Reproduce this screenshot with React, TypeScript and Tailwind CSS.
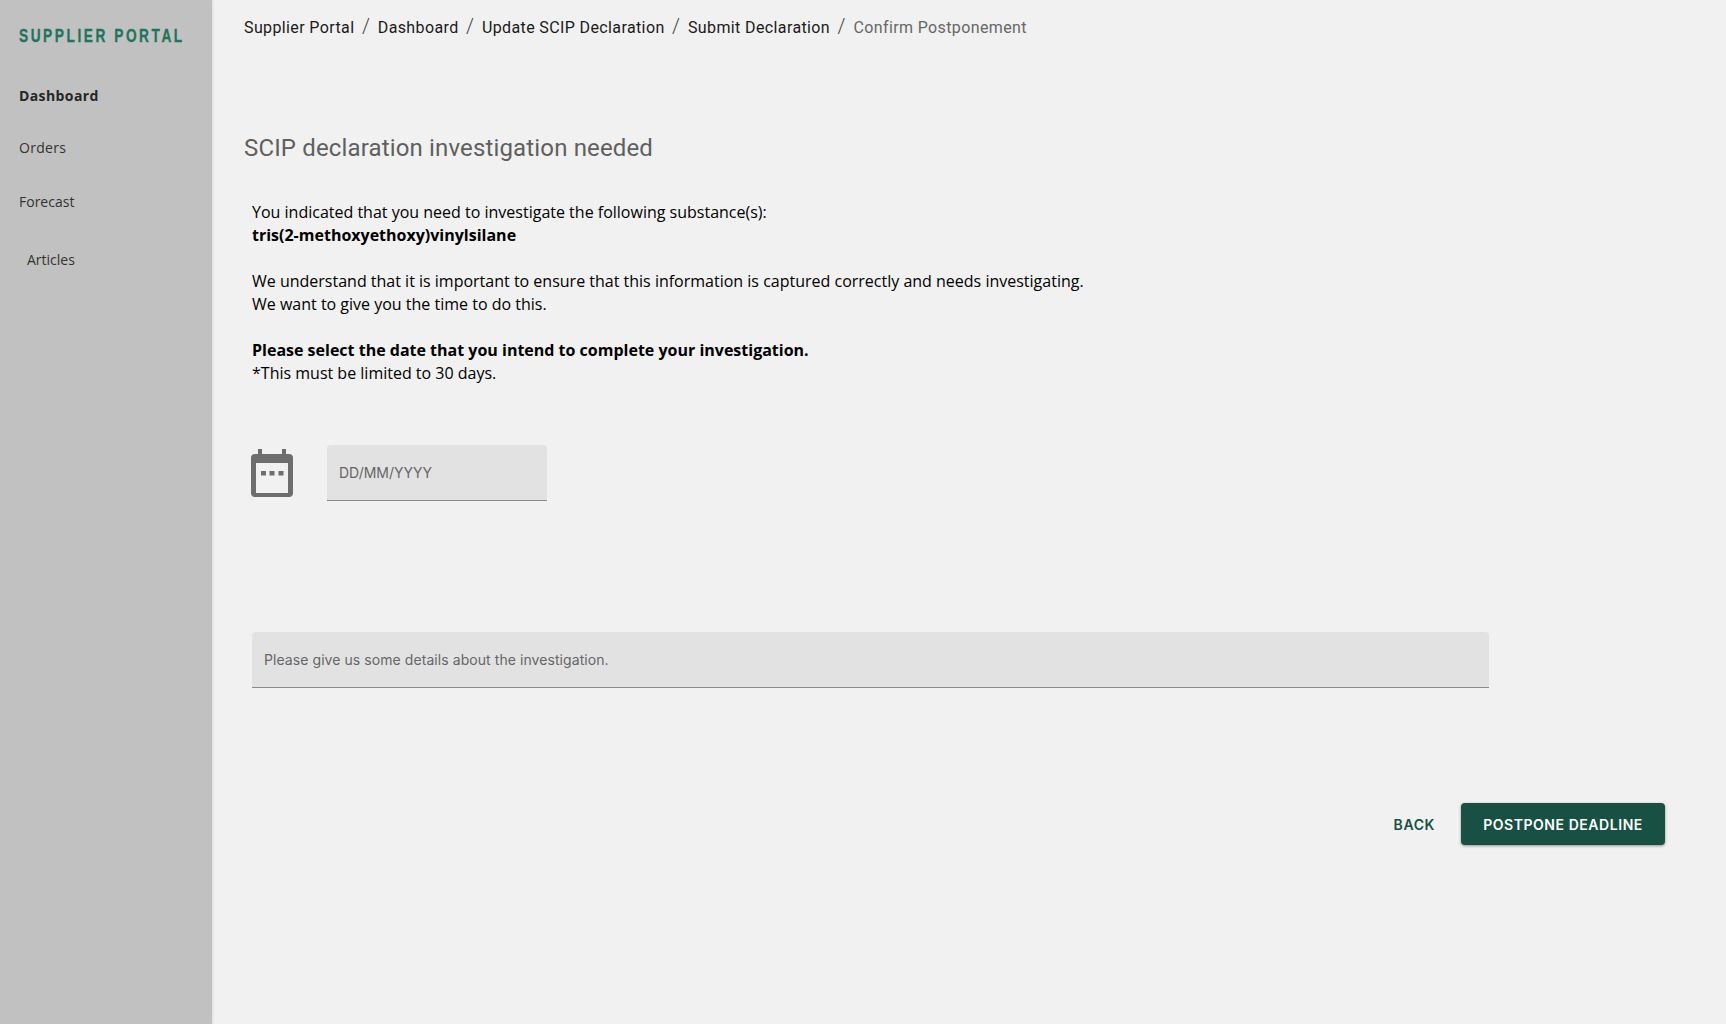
import React from 'react';

const CRUMBS = ['Supplier Portal', 'Dashboard', 'Update SCIP Declaration', 'Submit Declaration'];

const CalendarIcon = () => (
  <svg width="42" height="48" viewBox="0 0 42 48" className="-ml-[1px] shrink-0">
    <path
      fill="#6e6e6e"
      fillRule="evenodd"
      d="M7 0h4v5h20V0h4v5h3a4 4 0 0 1 4 4v35a4 4 0 0 1-4 4H4a4 4 0 0 1-4-4V9a4 4 0 0 1 4-4h3zM5 14v30h32V14z"
    />
    <rect x="10" y="22" width="5" height="4.5" fill="#6e6e6e" />
    <rect x="18.5" y="22" width="5" height="4.5" fill="#6e6e6e" />
    <rect x="27.5" y="22" width="5" height="4.5" fill="#6e6e6e" />
  </svg>
);

export default function App() {
  return (
    <div className="flex h-[1024px] overflow-hidden bg-[#f1f1f1] font-['Open_Sans',sans-serif]">
      {/* Sidebar */}
      <aside className="w-[212px] shrink-0 bg-[#c1c1c1] pl-[19px] shadow-[1px_0_2px_rgba(0,0,0,0.08)]">
        <div className="origin-left scale-x-[0.72] pt-[25px] font-['Liberation_Sans',sans-serif] text-[19px] leading-[22px] font-bold tracking-[3.55px] whitespace-nowrap text-[#22735c] [-webkit-text-stroke:0.3px_#22735c]">
          SUPPLIER PORTAL
        </div>
        <nav className="mt-[39px] text-[14px] leading-[20px] text-[#333]">
          <div className="font-bold tracking-[0.4px] text-[#262626]">Dashboard</div>
          <div className="mt-[32px] tracking-[0.3px]">Orders</div>
          <div className="mt-[34px]">Forecast</div>
          <div className="mt-[38px] pl-[8px]">Articles</div>
        </nav>
      </aside>

      {/* Main */}
      <main className="min-w-0 flex-1 pl-[32px]">
        <div className="flex items-center pt-[17px] font-['Roboto',sans-serif] text-[16px] leading-[22px] tracking-[0.38px] whitespace-nowrap">
          {CRUMBS.map((c) => (
            <React.Fragment key={c}>
              <span className="text-[#1a1a1a]">{c}</span>
              <span className="mx-[7.5px] -translate-y-[2px] text-[20px] font-light text-[#444]">/</span>
            </React.Fragment>
          ))}
          <span className="text-[#666]">Confirm Postponement</span>
        </div>

        <h1 className="mt-[93px] font-['Roboto',sans-serif] text-[24px] leading-[32px] font-normal tracking-[0.15px] text-[#5f5f5f]">
          SCIP declaration investigation needed
        </h1>

        <div className="ml-[8px] mt-[37px] text-[16px] leading-[23px] text-black">
          <p>You indicated that you need to investigate the following substance(s):</p>
          <p className="font-bold">tris(2-methoxyethoxy)vinylsilane</p>
          <p className="mt-[23px]">We understand that it is important to ensure that this information is captured correctly and needs investigating.</p>
          <p>We want to give you the time to do this.</p>
          <p className="mt-[23px] font-bold">Please select the date that you intend to complete your investigation.</p>
          <p>*This must be limited to 30 days.</p>
        </div>

        <div className="ml-[8px] mt-[60px] flex items-center gap-[34px]">
          <CalendarIcon />
          <div className="flex h-[56px] w-[220px] items-center rounded-t-[4px] border-b border-[#8a8a8a] bg-[#e2e2e2] pl-[12px] font-['Inter',sans-serif] text-[14px] text-[#666]">
            DD/MM/YYYY
          </div>
        </div>

        <div className="ml-[8px] mt-[131px] flex h-[56px] w-[1237px] items-center rounded-t-[4px] border-b border-[#8a8a8a] bg-[#e2e2e2] pl-[12px] font-['Inter',sans-serif] text-[14px] tracking-[0.07px] text-[#666]">
          Please give us some details about the investigation.
        </div>

        <div className="mt-[115px] flex items-center justify-end pr-[61px]">
          <button className="mr-[26px] font-['Inter',sans-serif] text-[14px] font-semibold tracking-[0.6px] text-[#185044]">
            BACK
          </button>
          <button className="flex h-[42px] w-[204px] items-center justify-center rounded-[4px] bg-[#185044] font-['Inter',sans-serif] text-[14px] font-semibold tracking-[0.55px] text-white shadow-[0_1px_3px_rgba(0,0,0,0.4)]">
            POSTPONE DEADLINE
          </button>
        </div>
      </main>
    </div>
  );
}
